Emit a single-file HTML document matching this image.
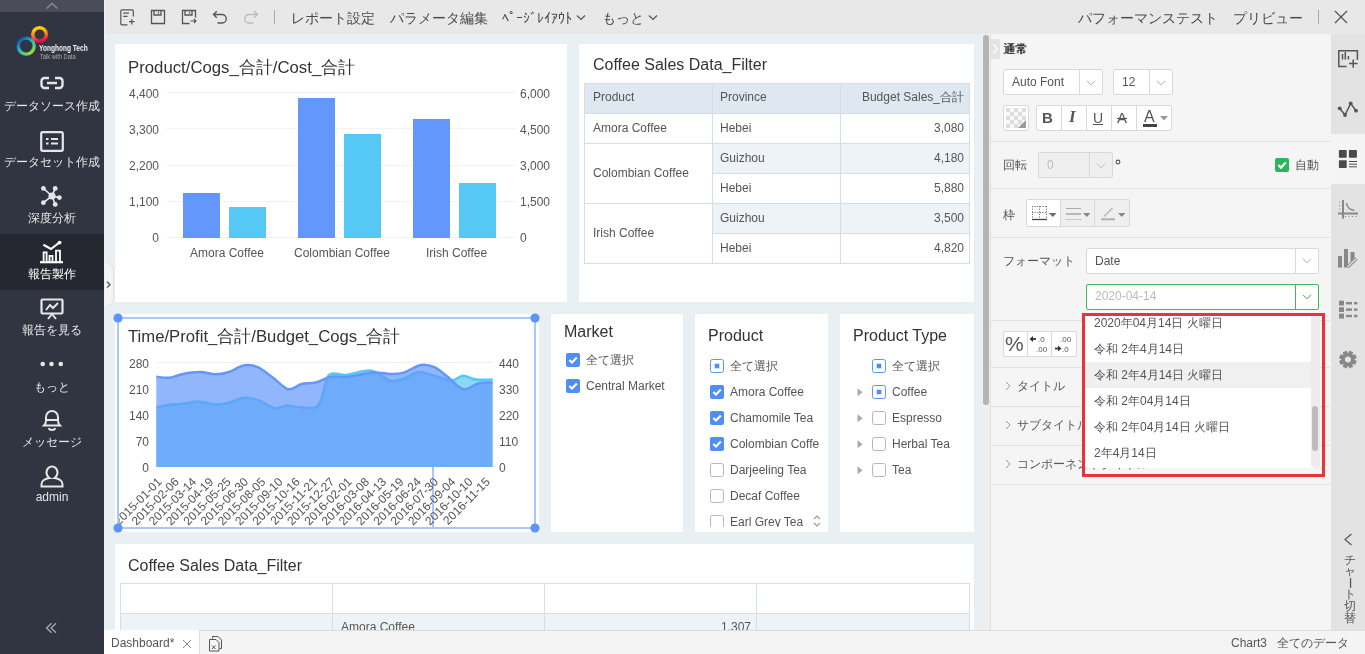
<!DOCTYPE html>
<html><head><meta charset="utf-8">
<style>
*{box-sizing:border-box;margin:0;padding:0}
html,body{width:1365px;height:654px;overflow:hidden;background:#e9f0f3;font-family:"Liberation Sans",sans-serif;color:#333}
.a{position:absolute}
#side{left:0;top:0;width:104px;height:654px;background:#313541}
#side .strip{left:0;top:0;width:104px;height:12px;background:#4a4c58}
.mi{position:absolute;left:0;width:104px;text-align:center;color:#e6e6e6;font-size:12px;line-height:14px;white-space:nowrap}
#tb{left:104px;top:0;width:1261px;height:34px;background:#e8e8e8}
.tbt{position:absolute;top:9.5px;font-size:14px;line-height:16px;color:#4a4a4a;white-space:nowrap}
.card{position:absolute;background:#fff}
.ttl{position:absolute;font-size:17px;line-height:20px;color:#333;white-space:nowrap}
.td{position:absolute;font-size:12px;line-height:14px;color:#555;white-space:nowrap}
.fi{position:absolute;font-size:12px;line-height:14px;color:#555;white-space:nowrap}
.rl{position:absolute;font-size:12px;line-height:14px;color:#555;white-space:nowrap}
.bx{position:absolute;background:#fff;border:1px solid #d9d9d9;border-radius:2px}
.hl{position:absolute;left:991px;width:339px;height:1px;background:#e2e2e2}
.dd{position:absolute;left:9px;height:26px;line-height:26px;font-size:12px;color:#555;white-space:nowrap;margin-top:-6px}
.ax{position:absolute;font-size:12px;line-height:14px;color:#555;white-space:nowrap}
#rp{left:991px;top:34px;width:340px;height:596px;background:#f5f5f5}
#ri{left:1331px;top:34px;width:34px;height:596px;background:#e3e3e3}
#bb{left:104px;top:630px;width:1261px;height:24px;background:#f4f4f4;border-top:1px solid #dcdcdc}
</style></head><body><div id="root" style="position:absolute;left:0;top:0;width:1365px;height:654px;will-change:transform">
<!-- SIDEBAR -->
<div id="side" class="a">
  <div class="strip a"><svg class="a" style="left:45px;top:2px" width="14" height="8" viewBox="0 0 14 8"><path d="M1.5 6.5L7 1.5L12.5 6.5" fill="none" stroke="#8a8c96" stroke-width="1.3"/></svg></div>
  <svg class="a" style="left:14px;top:24px" width="36" height="36" viewBox="0 0 36 36">
    <defs>
      <linearGradient id="g1" x1="0.3" y1="0" x2="0.5" y2="1"><stop offset="0" stop-color="#ffdc00"/><stop offset="0.5" stop-color="#ff8020"/><stop offset="1" stop-color="#f0084a"/></linearGradient>
      <linearGradient id="g2" x1="0" y1="0" x2="0.8" y2="1"><stop offset="0" stop-color="#1840b0"/><stop offset="0.5" stop-color="#22b4cc"/><stop offset="1" stop-color="#98dc30"/></linearGradient>
    </defs>
    <circle cx="25.6" cy="10.5" r="6.8" fill="none" stroke="url(#g1)" stroke-width="3.5"/>
    <circle cx="12.2" cy="22.1" r="8" fill="none" stroke="url(#g2)" stroke-width="3.3"/>
  </svg>
  <div class="a" style="left:39px;top:43px;font-size:9px;line-height:10px;font-weight:bold;color:#f0f0f0;white-space:nowrap;transform:scaleX(0.73);transform-origin:0 0">Yonghong Tech</div>
  <div class="a" style="left:40px;top:52.5px;font-size:6.5px;line-height:7px;color:#aaa;white-space:nowrap;transform:scaleX(0.88);transform-origin:0 0">Talk with Data</div>
  <svg class="a" style="left:40px;top:76px" width="24" height="14" viewBox="0 0 24 14"><path d="M9 2H4.5A3 3 0 0 0 1.5 5V9A3 3 0 0 0 4.5 12H9M15 2H19.5A3 3 0 0 1 22.5 5V9A3 3 0 0 1 19.5 12H15M7 7H17" fill="none" stroke="#e6e6e6" stroke-width="2.4"/></svg>
  <div class="mi" style="top:99px">データソース作成</div>
  <svg class="a" style="left:40px;top:131px" width="24" height="21" viewBox="0 0 24 21"><rect x="1.2" y="1.2" width="21.6" height="18.6" rx="1.5" fill="none" stroke="#e6e6e6" stroke-width="2.2"/><path d="M6 8H8.5M11 8H18M6 12.5H8.5M11 12.5H18" stroke="#e6e6e6" stroke-width="2.2"/></svg>
  <div class="mi" style="top:155px">データセット作成</div>
  <svg class="a" style="left:40px;top:184px" width="24" height="24" viewBox="0 0 24 24"><path d="M3.4 4.4L12 12M15.2 4.4L12 12M19.4 13.6L12 12M3.4 18.7L12 12M15.2 20.4L12 12" stroke="#e6e6e6" stroke-width="1.6"/><circle cx="12" cy="12" r="3.6" fill="#e6e6e6"/><circle cx="3.4" cy="4.4" r="2.4" fill="#e6e6e6"/><circle cx="15.2" cy="4.4" r="2.4" fill="#e6e6e6"/><circle cx="19.4" cy="13.6" r="2.4" fill="#e6e6e6"/><circle cx="3.4" cy="18.7" r="2.4" fill="#e6e6e6"/><circle cx="15.2" cy="20.4" r="2.4" fill="#e6e6e6"/></svg>
  <div class="mi" style="top:211px">深度分析</div>
  <div class="a" style="left:0;top:234px;width:104px;height:56px;background:#252831"></div>
  <svg class="a" style="left:39px;top:240px" width="26" height="26" viewBox="0 0 26 26"><path d="M4.4 4.7L12 9L20.4 2.5" fill="none" stroke="#fff" stroke-width="2.2"/><circle cx="20.6" cy="2.6" r="1.9" fill="#fff"/><path d="M4.6 21.5V12.4H7.6V21.5M10.5 21.5V15.8H13.5V21.5M17 21.5V10.7H21V21.5" fill="none" stroke="#fff" stroke-width="1.8"/><path d="M1 22.2H24" stroke="#fff" stroke-width="2.2"/></svg>
  <div class="mi" style="top:267px;color:#fff">報告製作</div>
  <svg class="a" style="left:40px;top:298px" width="24" height="22" viewBox="0 0 24 22"><rect x="1.5" y="1.5" width="21" height="14" rx="1" fill="none" stroke="#e6e6e6" stroke-width="2.2"/><path d="M6 12L10 7L13 10L18 5" fill="none" stroke="#e6e6e6" stroke-width="2"/><path d="M8 21L12 16L16 21" fill="none" stroke="#e6e6e6" stroke-width="2"/></svg>
  <div class="mi" style="top:323px">報告を見る</div>
  <svg class="a" style="left:40px;top:360px" width="24" height="8" viewBox="0 0 24 8"><circle cx="2.7" cy="4" r="2.3" fill="#e6e6e6"/><circle cx="11.5" cy="4" r="2.3" fill="#e6e6e6"/><circle cx="20.8" cy="4" r="2.3" fill="#e6e6e6"/></svg>
  <div class="mi" style="top:380px">もっと</div>
  <svg class="a" style="left:41px;top:409px" width="22" height="22" viewBox="0 0 22 22"><path d="M3 16.5H19C17.5 15 17 13.5 17 12V8A6 6 0 0 0 5 8V12C5 13.5 4.5 15 3 16.5ZM4.5 11H17.5M8 19A3 2 0 0 0 14 19" fill="none" stroke="#e6e6e6" stroke-width="2"/></svg>
  <div class="mi" style="top:435px">メッセージ</div>
  <svg class="a" style="left:40px;top:465px" width="24" height="23" viewBox="0 0 24 23"><path d="M12 1.5A5.5 6 0 0 1 17.5 7.5C17.5 10 16 12 14.5 13C19 13.5 22.5 16 22.5 19V21.5H1.5V19C1.5 16 5 13.5 9.5 13C8 12 6.5 10 6.5 7.5A5.5 6 0 0 1 12 1.5Z" fill="none" stroke="#e6e6e6" stroke-width="2"/></svg>
  <div class="mi" style="top:490px">admin</div>
  <svg class="a" style="left:45px;top:622px" width="14" height="12" viewBox="0 0 14 12"><path d="M6.5 1.2L1.6 6L6.5 10.8M11 1.2L6.1 6L11 10.8" fill="none" stroke="#a8aab2" stroke-width="1.3"/></svg>
</div>
<!-- TOOLBAR -->
<div id="tb" class="a">
  <svg class="a" style="left:16px;top:9px" width="16" height="17" viewBox="0 0 16 17"><path d="M13.3 7.5V1.8A1 1 0 0 0 12.3 0.8H1.8A1 1 0 0 0 0.8 1.8V14.8A1 1 0 0 0 1.8 15.8H7.5" fill="none" stroke="#555" stroke-width="1.2"/><path d="M3.2 4.2H9M3.2 7.4H7.5M9 12.7H14.5M11.8 10V15.5" fill="none" stroke="#555" stroke-width="1.2"/></svg>
  <svg class="a" style="left:46px;top:9px" width="16" height="16" viewBox="0 0 16 16"><path d="M1.5 1.5H14.5V14.5H1.5Z M4 1.5V6H11V1.5" fill="none" stroke="#555" stroke-width="1.3"/><path d="M8.5 2.8V4.5" stroke="#555" stroke-width="1.2"/></svg>
  <svg class="a" style="left:77px;top:9px" width="17" height="16" viewBox="0 0 17 16"><path d="M8.5 14.5H1.5V1.5H14.5V8.5 M4 1.5V6H11V1.5" fill="none" stroke="#555" stroke-width="1.3"/><path d="M8.5 2.8V4.5" stroke="#555" stroke-width="1.2"/><path d="M9.5 12H15M13 10L15 12L13 14" fill="none" stroke="#555" stroke-width="1.1"/></svg>
  <svg class="a" style="left:108px;top:10px" width="16" height="14" viewBox="0 0 16 14"><path d="M1.5 4.5H10A4.2 4.2 0 0 1 10 13H5.5M4.8 1.2L1.5 4.5L4.8 7.8" fill="none" stroke="#555" stroke-width="1.3"/></svg>
  <svg class="a" style="left:139px;top:10px" width="16" height="14" viewBox="0 0 16 14"><path d="M14.5 4.5H6A4.2 4.2 0 0 0 6 13H10.5M11.2 1.2L14.5 4.5L11.2 7.8" fill="none" stroke="#bbb" stroke-width="1.3"/></svg>
  <div class="a" style="left:170px;top:10px;width:1px;height:14px;background:#aaa"></div>
  <div class="tbt" style="left:187px">レポート設定</div>
  <div class="tbt" style="left:286px">パラメータ編集</div>
  <div class="tbt" style="left:398px">ﾍﾟｰｼﾞﾚｲｱｳﾄ</div>
  <svg class="a" style="left:472px;top:14px" width="10" height="7" viewBox="0 0 10 7"><path d="M1 1.5L5 5.5L9 1.5" fill="none" stroke="#555" stroke-width="1.2"/></svg>
  <div class="tbt" style="left:498px">もっと</div>
  <svg class="a" style="left:544px;top:14px" width="10" height="7" viewBox="0 0 10 7"><path d="M1 1.5L5 5.5L9 1.5" fill="none" stroke="#555" stroke-width="1.2"/></svg>
  <div class="tbt" style="left:974px">パフォーマンステスト</div>
  <div class="tbt" style="left:1129px">プリビュー</div>
  <div class="a" style="left:1214px;top:10px;width:1px;height:14px;background:#aaa"></div>
  <svg class="a" style="left:1230px;top:10px" width="14" height="14" viewBox="0 0 14 14"><path d="M1 1L13 13M13 1L1 13" stroke="#555" stroke-width="1.3"/></svg>
</div>
<!-- CANVAS CARDS -->
<div id="canvas">
<!-- card1 bar chart -->
<div class="card" style="left:115px;top:44px;width:452px;height:258px"></div>
<div class="ttl" style="left:128px;top:57.5px;font-size:16.75px">Product/Cogs_合計/Cost_合計</div>
<svg class="a" style="left:115px;top:44px" width="452" height="258" viewBox="115 44 452 258">
  <g stroke="#f3f3f3" stroke-width="1">
    <path d="M167 92.5H517M167 128.5H517M167 165.5H517M167 201.5H517M167 237.5H517"/>
  </g>
  <g fill="#6397fb">
    <rect x="183" y="193" width="37" height="45"/>
    <rect x="298" y="98" width="37" height="140"/>
    <rect x="413" y="119" width="37" height="119"/>
  </g>
  <g fill="#56c8f5">
    <rect x="229" y="207" width="37" height="31"/>
    <rect x="344" y="134" width="37" height="104"/>
    <rect x="459" y="183" width="37" height="55"/>
  </g>
</svg>
<div class="ax" style="right:1206px;top:87px">4,400</div>
<div class="ax" style="right:1206px;top:123px">3,300</div>
<div class="ax" style="right:1206px;top:159px">2,200</div>
<div class="ax" style="right:1206px;top:195px">1,100</div>
<div class="ax" style="right:1206px;top:231px">0</div>
<div class="ax" style="left:520px;top:87px">6,000</div>
<div class="ax" style="left:520px;top:123px">4,500</div>
<div class="ax" style="left:520px;top:159px">3,000</div>
<div class="ax" style="left:520px;top:195px">1,500</div>
<div class="ax" style="left:520px;top:231px">0</div>
<div class="ax" style="left:190px;top:246px">Amora Coffee</div>
<div class="ax" style="left:294px;top:246px">Colombian Coffee</div>
<div class="ax" style="left:426px;top:246px">Irish Coffee</div>
<svg class="a" style="left:104px;top:256px" width="12" height="58" viewBox="104 256 12 58"><path d="M104 258C104 264 113.5 263 113.5 270V299C113.5 306 104 305 104 312Z" fill="#f4f4f4" stroke="#e2e2e2" stroke-width="1"/><path d="M107 281.8L110 284.7L107 287.6" fill="none" stroke="#555" stroke-width="1.3"/></svg>
<!-- card2 table -->
<div class="card" style="left:579px;top:44px;width:395px;height:258px"></div>
<div class="ttl" style="left:593px;top:55px;font-size:16px">Coffee Sales Data_Filter</div>
<div class="a" style="left:584px;top:83px;width:386px;height:181px;border:1px solid #d5dee6;background:#fff"></div>
<div class="a" style="left:585px;top:84px;width:384px;height:29px;background:#dfe8f1"></div>
<div class="a" style="left:713px;top:144px;width:256px;height:29px;background:#eef3f7"></div>
<div class="a" style="left:713px;top:204px;width:256px;height:29px;background:#eef3f7"></div>
<svg class="a" style="left:584px;top:83px" width="386" height="181" viewBox="584 83 386 181">
  <g stroke="#d5dee6" stroke-width="1">
    <path d="M584 113.5H970M584 143.5H970M713 173.5H970M584 203.5H970M713 233.5H970M712.5 83V264M840.5 83V264"/>
  </g>
</svg>
<div class="td" style="left:593px;top:90px">Product</div>
<div class="td" style="left:720px;top:90px">Province</div>
<div class="td" style="right:401px;top:90px">Budget Sales_合計</div>
<div class="td" style="left:593px;top:121px">Amora Coffee</div>
<div class="td" style="left:720px;top:121px">Hebei</div>
<div class="td" style="right:401px;top:121px">3,080</div>
<div class="td" style="left:593px;top:166px">Colombian Coffee</div>
<div class="td" style="left:720px;top:151px">Guizhou</div>
<div class="td" style="right:401px;top:151px">4,180</div>
<div class="td" style="left:720px;top:181px">Hebei</div>
<div class="td" style="right:401px;top:181px">5,880</div>
<div class="td" style="left:593px;top:226px">Irish Coffee</div>
<div class="td" style="left:720px;top:211px">Guizhou</div>
<div class="td" style="right:401px;top:211px">3,500</div>
<div class="td" style="left:720px;top:241px">Hebei</div>
<div class="td" style="right:401px;top:241px">4,820</div>
<!-- line chart card -->
<div class="card" style="left:115px;top:314px;width:424px;height:218px"></div>
<div class="ttl" style="left:128px;top:327px;font-size:16.7px">Time/Profit_合計/Budget_Cogs_合計</div>
<svg class="a" style="left:115px;top:314px" width="424" height="218" viewBox="115 314 424 218">
  <defs><clipPath id="cl"><rect x="119" y="314" width="420" height="218"/></clipPath></defs>
  <path d="M156 362.5H493" stroke="#f0f0f0" stroke-width="1"/>
  <path d="M156.3 407.4 C158.9 406.9 166.8 405.1 171.6 404.5 C176.4 403.9 180.5 404.0 185.0 403.5 C189.5 403.0 193.3 401.4 198.4 401.6 C203.5 401.8 210.5 404.3 215.6 404.5 C220.7 404.7 224.2 403.7 229.0 402.6 C233.8 401.5 239.2 398.1 244.3 397.8 C249.4 397.5 254.5 398.9 259.6 400.7 C264.7 402.4 270.4 407.4 274.9 408.3 C279.3 409.2 281.9 406.0 286.3 405.8 C290.8 405.6 296.7 407.1 301.6 407.4 C306.5 407.7 312.4 408.8 315.7 407.4 C319.0 406.0 319.3 404.2 321.5 398.8 C323.7 393.4 325.0 378.9 329.1 374.9 C333.2 370.9 339.3 375.6 346.3 374.9 C353.3 374.2 363.9 369.8 371.2 370.7 C378.5 371.6 384.9 379.3 390.3 380.6 C395.7 381.9 398.9 380.1 403.7 378.7 C408.5 377.3 413.9 372.5 419.0 372.0 C424.1 371.5 428.9 374.4 434.3 375.8 C439.7 377.2 446.7 380.6 451.5 380.6 C456.3 380.6 458.9 376.0 463.0 375.8 C467.1 375.6 471.4 379.0 476.3 379.6 C481.2 380.2 489.9 379.6 492.6 379.6 L492.6 467 L156.3 467 Z" fill="#56c8f5" fill-opacity="0.7"/>
  <path d="M156.3 407.4 C158.9 406.9 166.8 405.1 171.6 404.5 C176.4 403.9 180.5 404.0 185.0 403.5 C189.5 403.0 193.3 401.4 198.4 401.6 C203.5 401.8 210.5 404.3 215.6 404.5 C220.7 404.7 224.2 403.7 229.0 402.6 C233.8 401.5 239.2 398.1 244.3 397.8 C249.4 397.5 254.5 398.9 259.6 400.7 C264.7 402.4 270.4 407.4 274.9 408.3 C279.3 409.2 281.9 406.0 286.3 405.8 C290.8 405.6 296.7 407.1 301.6 407.4 C306.5 407.7 312.4 408.8 315.7 407.4 C319.0 406.0 319.3 404.2 321.5 398.8 C323.7 393.4 325.0 378.9 329.1 374.9 C333.2 370.9 339.3 375.6 346.3 374.9 C353.3 374.2 363.9 369.8 371.2 370.7 C378.5 371.6 384.9 379.3 390.3 380.6 C395.7 381.9 398.9 380.1 403.7 378.7 C408.5 377.3 413.9 372.5 419.0 372.0 C424.1 371.5 428.9 374.4 434.3 375.8 C439.7 377.2 446.7 380.6 451.5 380.6 C456.3 380.6 458.9 376.0 463.0 375.8 C467.1 375.6 471.4 379.0 476.3 379.6 C481.2 380.2 489.9 379.6 492.6 379.6" fill="none" stroke="#56c8f5" stroke-width="2.5"/>
  <path d="M156.3 376.8 C158.5 376.9 165.2 378.2 169.7 377.7 C174.1 377.2 177.9 374.8 183.0 373.9 C188.1 372.9 194.9 371.9 200.3 372.0 C205.7 372.1 210.8 374.3 215.6 374.3 C220.4 374.3 224.2 373.5 229.0 372.0 C233.8 370.5 239.5 366.1 244.3 365.3 C249.1 364.5 252.9 365.1 257.7 367.2 C262.5 369.3 267.9 374.0 273.0 377.7 C278.1 381.4 283.5 388.1 288.3 389.2 C293.1 390.2 297.0 385.1 301.6 384.0 C306.2 382.9 310.8 383.7 315.7 382.5 C320.6 381.3 325.6 377.8 331.0 376.8 C336.4 375.9 341.2 377.5 348.2 376.8 C355.2 376.1 366.0 373.1 373.0 372.6 C380.0 372.1 385.2 373.9 390.3 373.9 C395.4 373.9 398.6 374.1 403.7 372.6 C408.8 371.1 415.8 365.8 420.9 364.9 C426.0 364.0 429.8 365.2 434.3 367.2 C438.8 369.2 442.9 373.1 447.7 376.8 C452.5 380.5 457.9 388.1 463.0 389.2 C468.1 390.3 473.4 384.6 478.3 383.5 C483.2 382.4 490.2 382.7 492.6 382.5 L492.6 467 L156.3 467 Z" fill="#6397fb" fill-opacity="0.7"/>
  <path d="M156.3 376.8 C158.5 376.9 165.2 378.2 169.7 377.7 C174.1 377.2 177.9 374.8 183.0 373.9 C188.1 372.9 194.9 371.9 200.3 372.0 C205.7 372.1 210.8 374.3 215.6 374.3 C220.4 374.3 224.2 373.5 229.0 372.0 C233.8 370.5 239.5 366.1 244.3 365.3 C249.1 364.5 252.9 365.1 257.7 367.2 C262.5 369.3 267.9 374.0 273.0 377.7 C278.1 381.4 283.5 388.1 288.3 389.2 C293.1 390.2 297.0 385.1 301.6 384.0 C306.2 382.9 310.8 383.7 315.7 382.5 C320.6 381.3 325.6 377.8 331.0 376.8 C336.4 375.9 341.2 377.5 348.2 376.8 C355.2 376.1 366.0 373.1 373.0 372.6 C380.0 372.1 385.2 373.9 390.3 373.9 C395.4 373.9 398.6 374.1 403.7 372.6 C408.8 371.1 415.8 365.8 420.9 364.9 C426.0 364.0 429.8 365.2 434.3 367.2 C438.8 369.2 442.9 373.1 447.7 376.8 C452.5 380.5 457.9 388.1 463.0 389.2 C468.1 390.3 473.4 384.6 478.3 383.5 C483.2 382.4 490.2 382.7 492.6 382.5" fill="none" stroke="#6397fb" stroke-width="2.5"/>
  <path d="M433 467V528" stroke="#a8c6ff" stroke-width="2"/>
  <g clip-path="url(#cl)" font-family="Liberation Sans" font-size="12" fill="#555"><text x="162.5" y="482.6" text-anchor="end" transform="rotate(-45 162.5 482.6)">2015-01-01</text><text x="179.8" y="482.6" text-anchor="end" transform="rotate(-45 179.8 482.6)">2015-02-06</text><text x="197.1" y="482.6" text-anchor="end" transform="rotate(-45 197.1 482.6)">2015-03-14</text><text x="214.3" y="482.6" text-anchor="end" transform="rotate(-45 214.3 482.6)">2015-04-19</text><text x="231.6" y="482.6" text-anchor="end" transform="rotate(-45 231.6 482.6)">2015-05-25</text><text x="248.9" y="482.6" text-anchor="end" transform="rotate(-45 248.9 482.6)">2015-06-30</text><text x="266.2" y="482.6" text-anchor="end" transform="rotate(-45 266.2 482.6)">2015-08-05</text><text x="283.5" y="482.6" text-anchor="end" transform="rotate(-45 283.5 482.6)">2015-09-10</text><text x="300.7" y="482.6" text-anchor="end" transform="rotate(-45 300.7 482.6)">2015-10-16</text><text x="318.0" y="482.6" text-anchor="end" transform="rotate(-45 318.0 482.6)">2015-11-21</text><text x="335.3" y="482.6" text-anchor="end" transform="rotate(-45 335.3 482.6)">2015-12-27</text><text x="352.6" y="482.6" text-anchor="end" transform="rotate(-45 352.6 482.6)">2016-02-01</text><text x="369.9" y="482.6" text-anchor="end" transform="rotate(-45 369.9 482.6)">2016-03-08</text><text x="387.1" y="482.6" text-anchor="end" transform="rotate(-45 387.1 482.6)">2016-04-13</text><text x="404.4" y="482.6" text-anchor="end" transform="rotate(-45 404.4 482.6)">2016-05-19</text><text x="421.7" y="482.6" text-anchor="end" transform="rotate(-45 421.7 482.6)">2016-06-24</text><text x="439.0" y="482.6" text-anchor="end" transform="rotate(-45 439.0 482.6)">2016-07-30</text><text x="456.3" y="482.6" text-anchor="end" transform="rotate(-45 456.3 482.6)">2016-09-04</text><text x="473.5" y="482.6" text-anchor="end" transform="rotate(-45 473.5 482.6)">2016-10-10</text><text x="490.8" y="482.6" text-anchor="end" transform="rotate(-45 490.8 482.6)">2016-11-15</text></g>
  </svg>
<div class="ax" style="right:1216px;top:357px">280</div>
<div class="ax" style="right:1216px;top:383px">210</div>
<div class="ax" style="right:1216px;top:409px">140</div>
<div class="ax" style="right:1216px;top:435px">70</div>
<div class="ax" style="right:1216px;top:461px">0</div>
<div class="ax" style="left:499px;top:357px">440</div>
<div class="ax" style="left:499px;top:383px">330</div>
<div class="ax" style="left:499px;top:409px">220</div>
<div class="ax" style="left:499px;top:435px">110</div>
<div class="ax" style="left:499px;top:461px">0</div>
<svg class="a" style="left:110px;top:310px" width="434" height="226" viewBox="110 310 434 226">
  <rect x="118" y="318" width="417" height="210" fill="none" stroke="#a8c6ff" stroke-width="2"/>
  <g fill="#5b95f9"><circle cx="118" cy="318" r="4.6"/><circle cx="535" cy="318" r="4.6"/><circle cx="118" cy="528" r="4.6"/><circle cx="535" cy="528" r="4.6"/></g>
</svg>
<!-- filters -->
<div class="card" style="left:551px;top:314px;width:132px;height:218px"></div>
<div class="card" style="left:695px;top:314px;width:133px;height:218px"></div>
<div class="card" style="left:840px;top:314px;width:134px;height:218px"></div>
<div class="ttl" style="left:564px;top:322px;font-size:16px">Market</div>
<svg class="a" style="left:566px;top:353px" width="14" height="14" viewBox="0 0 14 14"><rect x="0" y="0" width="14" height="14" rx="2" fill="#4f8ef7"/><path d="M3.3 7L6 9.6L10.8 4.6" fill="none" stroke="#fff" stroke-width="2.1"/></svg><div class="fi" style="left:586px;top:353px">全て選択</div>
<svg class="a" style="left:566px;top:379px" width="14" height="14" viewBox="0 0 14 14"><rect x="0" y="0" width="14" height="14" rx="2" fill="#4f8ef7"/><path d="M3.3 7L6 9.6L10.8 4.6" fill="none" stroke="#fff" stroke-width="2.1"/></svg><div class="fi" style="left:586px;top:379px">Central Market</div>
<div class="ttl" style="left:708px;top:326px;font-size:16px">Product</div>
<div class="a" style="left:695px;top:314px;width:133px;height:213px;overflow:hidden"><svg class="a" style="left:15px;top:45px" width="14" height="14" viewBox="0 0 14 14"><rect x="0.5" y="0.5" width="13" height="13" rx="2" fill="#fff" stroke="#5b95f9" stroke-width="1"/><rect x="4.7" y="4.7" width="4.6" height="4.6" fill="#4f8ef7"/></svg><div class="fi" style="left:35px;top:45px">全て選択</div>
<svg class="a" style="left:15px;top:71px" width="14" height="14" viewBox="0 0 14 14"><rect x="0" y="0" width="14" height="14" rx="2" fill="#4f8ef7"/><path d="M3.3 7L6 9.6L10.8 4.6" fill="none" stroke="#fff" stroke-width="2.1"/></svg><div class="fi" style="left:35px;top:71px">Amora Coffee</div>
<svg class="a" style="left:15px;top:97px" width="14" height="14" viewBox="0 0 14 14"><rect x="0" y="0" width="14" height="14" rx="2" fill="#4f8ef7"/><path d="M3.3 7L6 9.6L10.8 4.6" fill="none" stroke="#fff" stroke-width="2.1"/></svg><div class="fi" style="left:35px;top:97px">Chamomile Tea</div>
<svg class="a" style="left:15px;top:123px" width="14" height="14" viewBox="0 0 14 14"><rect x="0" y="0" width="14" height="14" rx="2" fill="#4f8ef7"/><path d="M3.3 7L6 9.6L10.8 4.6" fill="none" stroke="#fff" stroke-width="2.1"/></svg><div class="fi" style="left:35px;top:123px">Colombian Coffe</div>
<svg class="a" style="left:15px;top:149px" width="14" height="14" viewBox="0 0 14 14"><rect x="0.5" y="0.5" width="13" height="13" rx="2" fill="#fff" stroke="#b8b8b8" stroke-width="1"/></svg><div class="fi" style="left:35px;top:149px">Darjeeling Tea</div>
<svg class="a" style="left:15px;top:175px" width="14" height="14" viewBox="0 0 14 14"><rect x="0.5" y="0.5" width="13" height="13" rx="2" fill="#fff" stroke="#b8b8b8" stroke-width="1"/></svg><div class="fi" style="left:35px;top:175px">Decaf Coffee</div>
<svg class="a" style="left:15px;top:201px" width="14" height="14" viewBox="0 0 14 14"><rect x="0.5" y="0.5" width="13" height="13" rx="2" fill="#fff" stroke="#b8b8b8" stroke-width="1"/></svg><div class="fi" style="left:35px;top:201px">Earl Grey Tea</div>
<svg class="a" style="left:117px;top:200px" width="10" height="14" viewBox="0 0 10 14"><path d="M2 5L5 2L8 5M2 9L5 12L8 9" fill="none" stroke="#999" stroke-width="1.1"/></svg></div>
<div class="ttl" style="left:853px;top:326px;font-size:16px">Product Type</div>
<svg class="a" style="left:872px;top:359px" width="14" height="14" viewBox="0 0 14 14"><rect x="0.5" y="0.5" width="13" height="13" rx="2" fill="#fff" stroke="#5b95f9" stroke-width="1"/><rect x="4.7" y="4.7" width="4.6" height="4.6" fill="#4f8ef7"/></svg><div class="fi" style="left:892px;top:359px">全て選択</div>
<svg class="a" style="left:856.5px;top:388px" width="7" height="9" viewBox="0 0 7 9"><path d="M0.5 0.3L5.6 4.3L0.5 8.3Z" fill="#aaa"/></svg><svg class="a" style="left:872px;top:385px" width="14" height="14" viewBox="0 0 14 14"><rect x="0.5" y="0.5" width="13" height="13" rx="2" fill="#fff" stroke="#5b95f9" stroke-width="1"/><rect x="4.7" y="4.7" width="4.6" height="4.6" fill="#4f8ef7"/></svg><div class="fi" style="left:892px;top:385px">Coffee</div>
<svg class="a" style="left:856.5px;top:414px" width="7" height="9" viewBox="0 0 7 9"><path d="M0.5 0.3L5.6 4.3L0.5 8.3Z" fill="#aaa"/></svg><svg class="a" style="left:872px;top:411px" width="14" height="14" viewBox="0 0 14 14"><rect x="0.5" y="0.5" width="13" height="13" rx="2" fill="#fff" stroke="#b8b8b8" stroke-width="1"/></svg><div class="fi" style="left:892px;top:411px">Espresso</div>
<svg class="a" style="left:856.5px;top:440px" width="7" height="9" viewBox="0 0 7 9"><path d="M0.5 0.3L5.6 4.3L0.5 8.3Z" fill="#aaa"/></svg><svg class="a" style="left:872px;top:437px" width="14" height="14" viewBox="0 0 14 14"><rect x="0.5" y="0.5" width="13" height="13" rx="2" fill="#fff" stroke="#b8b8b8" stroke-width="1"/></svg><div class="fi" style="left:892px;top:437px">Herbal Tea</div>
<svg class="a" style="left:856.5px;top:466px" width="7" height="9" viewBox="0 0 7 9"><path d="M0.5 0.3L5.6 4.3L0.5 8.3Z" fill="#aaa"/></svg><svg class="a" style="left:872px;top:463px" width="14" height="14" viewBox="0 0 14 14"><rect x="0.5" y="0.5" width="13" height="13" rx="2" fill="#fff" stroke="#b8b8b8" stroke-width="1"/></svg><div class="fi" style="left:892px;top:463px">Tea</div>
<!-- bottom table -->
<div class="card" style="left:115px;top:544px;width:859px;height:90px"></div>
<div class="ttl" style="left:128px;top:556px;font-size:16px">Coffee Sales Data_Filter</div>
<div class="a" style="left:120px;top:583px;width:850px;height:60px;border:1px solid #d5dee6;background:#fff"></div>
<div class="a" style="left:121px;top:614px;width:848px;height:30px;background:#eef3f7"></div>
<svg class="a" style="left:120px;top:583px" width="850" height="60" viewBox="120 583 850 60">
  <g stroke="#d5dee6" stroke-width="1"><path d="M120 613.5H970M332.5 583V643M544.5 583V643M756.5 583V643"/></g>
</svg>
<div class="td" style="left:341px;top:620px">Amora Coffee</div>
<div class="td" style="right:614px;top:620px">1,307</div>
</div>
<div class="a" style="left:104px;top:0;width:1px;height:630px;background:#f0f0f0"></div>
<!-- RIGHT PANEL -->
<!-- canvas scrollbar -->
<div class="a" style="left:982px;top:34px;width:8px;height:596px;background:#efefef"></div>
<div class="a" style="left:983px;top:35px;width:6px;height:370px;background:#b4b4b4;border-radius:3px"></div>
<div class="a" style="left:990px;top:34px;width:1px;height:596px;background:#e0e0e0"></div>
<div id="rp" class="a"></div>
<div class="a" style="left:991px;top:39px;width:9px;height:20px;background:#e3e3e3;border-radius:0 2px 2px 0"></div>
<svg class="a" style="left:992px;top:43px" width="7" height="12" viewBox="0 0 7 12"><path d="M1.5 1.5L5.5 6L1.5 10.5" fill="none" stroke="#fff" stroke-width="1.3"/></svg>
<div class="rl" style="left:1003px;top:42px;color:#333;text-shadow:0.6px 0 0 #333">通常</div>
<div class="bx" style="left:1003px;top:69px;width:100px;height:26px"></div>
<div class="a" style="left:1079px;top:70px;width:1px;height:24px;background:#d9d9d9"></div>
<div class="rl" style="left:1012px;top:75px;color:#555">Auto Font</div>
<svg class="a" style="left:1086px;top:80px" width="10" height="6" viewBox="0 0 10 6"><path d="M1 0.8L5 4.8L9 0.8" fill="none" stroke="#aaa" stroke-width="1"/></svg>
<div class="bx" style="left:1113px;top:69px;width:60px;height:26px"></div>
<div class="a" style="left:1149px;top:70px;width:1px;height:24px;background:#d9d9d9"></div>
<div class="rl" style="left:1122px;top:75px;color:#555">12</div>
<svg class="a" style="left:1156px;top:80px" width="10" height="6" viewBox="0 0 10 6"><path d="M1 0.8L5 4.8L9 0.8" fill="none" stroke="#aaa" stroke-width="1"/></svg>
<div class="bx" style="left:1003px;top:105px;width:26px;height:26px"></div>
<svg class="a" style="left:1006px;top:108px" width="20" height="20" viewBox="0 0 20 20">
 <rect width="20" height="20" fill="#f7f7f7"/>
 <g fill="#dedede"><rect x="0" y="0" width="4" height="4"/><rect x="8" y="0" width="4" height="4"/><rect x="16" y="0" width="4" height="4"/><rect x="4" y="4" width="4" height="4"/><rect x="12" y="4" width="4" height="4"/><rect x="0" y="8" width="4" height="4"/><rect x="8" y="8" width="4" height="4"/><rect x="16" y="8" width="4" height="4"/><rect x="4" y="12" width="4" height="4"/><rect x="12" y="12" width="4" height="4"/><rect x="0" y="16" width="4" height="4"/><rect x="8" y="16" width="4" height="4"/></g>
 <path d="M20 12V20H12Z" fill="#9a9a9a"/>
</svg>
<div class="bx" style="left:1036px;top:105px;width:136px;height:26px"></div>
<div class="a" style="left:1061px;top:106px;width:1px;height:24px;background:#d9d9d9"></div>
<div class="a" style="left:1086px;top:106px;width:1px;height:24px;background:#d9d9d9"></div>
<div class="a" style="left:1111px;top:106px;width:1px;height:24px;background:#d9d9d9"></div>
<div class="a" style="left:1136px;top:106px;width:1px;height:24px;background:#d9d9d9"></div>
<div class="a" style="left:1042px;top:109px;font-size:15px;line-height:18px;font-weight:bold;color:#555">B</div>
<div class="a" style="left:1069px;top:108px;font-size:17px;line-height:18px;font-family:'Liberation Serif',serif;font-style:italic;font-weight:bold;color:#555">I</div>
<div class="a" style="left:1093px;top:109px;font-size:14px;line-height:18px;color:#555;text-decoration:underline">U</div>
<div class="a" style="left:1117px;top:109px;font-size:15px;line-height:18px;color:#555;text-decoration:line-through">A</div>
<div class="a" style="left:1144px;top:108px;font-size:16px;line-height:18px;color:#555">A</div>
<div class="a" style="left:1143px;top:124px;width:14px;height:3px;background:#444"></div>
<svg class="a" style="left:1160px;top:116px" width="8" height="5" viewBox="0 0 8 5"><path d="M0 0H8L4 4.5Z" fill="#999"/></svg>
<div class="hl" style="top:141px"></div>
<div class="rl" style="left:1003px;top:158px">回転</div>
<div class="bx" style="left:1038px;top:152px;width:75px;height:26px;background:#efefef"></div>
<div class="a" style="left:1089px;top:153px;width:1px;height:24px;background:#d9d9d9"></div>
<div class="rl" style="left:1047px;top:158px;color:#bbb">0</div>
<svg class="a" style="left:1096px;top:163px" width="10" height="6" viewBox="0 0 10 6"><path d="M1 0.8L5 4.8L9 0.8" fill="none" stroke="#bbb" stroke-width="1"/></svg>
<svg class="a" style="left:1115px;top:159px" width="6" height="6" viewBox="0 0 6 6"><circle cx="3" cy="3" r="1.9" fill="none" stroke="#555" stroke-width="1.1"/></svg>
<svg class="a" style="left:1275px;top:158px" width="14" height="14" viewBox="0 0 14 14"><rect width="14" height="14" rx="2" fill="#2db55d"/><path d="M3.3 7L6 9.6L10.8 4.6" fill="none" stroke="#fff" stroke-width="2.2"/></svg>
<div class="rl" style="left:1295px;top:158px">自動</div>
<div class="hl" style="top:188px"></div>
<div class="rl" style="left:1003px;top:208px">枠</div>
<div class="bx" style="left:1026px;top:199px;width:104px;height:28px;background:#efefef"></div>
<div class="a" style="left:1027px;top:200px;width:33px;height:26px;background:#fff"></div>
<div class="a" style="left:1060px;top:200px;width:1px;height:26px;background:#d9d9d9"></div>
<div class="a" style="left:1094px;top:200px;width:1px;height:26px;background:#d9d9d9"></div>
<svg class="a" style="left:1026px;top:199px" width="104" height="28" viewBox="1026 199 104 28">
  <g stroke="#777" stroke-width="1" stroke-dasharray="1.2 1.4"><path d="M1032 206.5H1047M1032 212.5H1047M1032.5 206V218M1039.5 206V218M1046.5 206V218"/></g>
  <path d="M1032 219.5H1047" stroke="#444" stroke-width="1.3"/>
  <path d="M1049 213H1056.5L1052.75 217Z" fill="#666"/>
  <path d="M1066 208.5H1081" stroke="#aaa" stroke-width="1"/>
  <path d="M1066 214H1081" stroke="#aaa" stroke-width="1.6"/>
  <path d="M1066 219.5H1081" stroke="#aaa" stroke-width="1" stroke-dasharray="1.5 1.2"/>
  <path d="M1083 213H1090.5L1086.75 217Z" fill="#888"/>
  <path d="M1104 216.5L1112.5 208" stroke="#bbb" stroke-width="1.6"/>
  <path d="M1101 219.3H1115" stroke="#aaa" stroke-width="1.8"/>
  <path d="M1118 213H1125.5L1121.75 217Z" fill="#888"/>
</svg>
<div class="hl" style="top:237px"></div>
<div class="rl" style="left:1003px;top:254px">フォーマット</div>
<div class="bx" style="left:1086px;top:248px;width:233px;height:26px"></div>
<div class="a" style="left:1295px;top:249px;width:1px;height:24px;background:#d9d9d9"></div>
<div class="rl" style="left:1095px;top:254px;color:#555">Date</div>
<svg class="a" style="left:1302px;top:258px" width="10" height="6" viewBox="0 0 10 6"><path d="M1 0.8L5 4.8L9 0.8" fill="none" stroke="#aaa" stroke-width="1"/></svg>
<div class="bx" style="left:1086px;top:284px;width:233px;height:26px;border-color:#3dba5e"></div>
<div class="a" style="left:1295px;top:285px;width:1px;height:24px;background:#3dba5e"></div>
<div class="rl" style="left:1095px;top:289px;color:#bbb">2020-04-14</div>
<svg class="a" style="left:1302px;top:294px" width="10" height="6" viewBox="0 0 10 6"><path d="M1 0.8L5 4.8L9 0.8" fill="none" stroke="#2fae52" stroke-width="1"/></svg>
<div class="hl" style="top:320px"></div>
<div class="bx" style="left:1003px;top:331px;width:74px;height:26px"></div>
<div class="a" style="left:1027px;top:332px;width:1px;height:24px;background:#d9d9d9"></div>
<div class="a" style="left:1051px;top:332px;width:1px;height:24px;background:#d9d9d9"></div>
<div class="a" style="left:1005px;top:332px;font-size:21px;line-height:24px;color:#555">%</div>
<svg class="a" style="left:1028px;top:332px" width="23" height="24" viewBox="0 0 23 24"><path d="M8 7H3.5" stroke="#333" stroke-width="1.8"/><path d="M1.5 7L5 4V10Z" fill="#333"/><text x="10" y="10" font-size="8" font-family="Liberation Sans" fill="#555">.0</text><text x="8" y="20" font-size="8" font-family="Liberation Sans" fill="#555">.00</text></svg>
<svg class="a" style="left:1052px;top:332px" width="23" height="24" viewBox="0 0 23 24"><text x="8" y="10" font-size="8" font-family="Liberation Sans" fill="#555">.00</text><path d="M3 16.5H7.5" stroke="#333" stroke-width="1.8"/><path d="M9.5 16.5L6 13.5V19.5Z" fill="#333"/><text x="10" y="20" font-size="8" font-family="Liberation Sans" fill="#555">.0</text></svg>
<div class="hl" style="top:367px"></div>
<svg class="a" style="left:1005px;top:381px" width="6" height="10" viewBox="0 0 6 10"><path d="M1 1L5 5L1 9" fill="none" stroke="#999" stroke-width="1"/></svg>
<div class="rl" style="left:1017px;top:379px">タイトル</div>
<div class="hl" style="top:406px"></div>
<svg class="a" style="left:1005px;top:420px" width="6" height="10" viewBox="0 0 6 10"><path d="M1 1L5 5L1 9" fill="none" stroke="#999" stroke-width="1"/></svg>
<div class="rl" style="left:1017px;top:418px">サブタイトル</div>
<div class="hl" style="top:445px"></div>
<svg class="a" style="left:1005px;top:459px" width="6" height="10" viewBox="0 0 6 10"><path d="M1 1L5 5L1 9" fill="none" stroke="#999" stroke-width="1"/></svg>
<div class="rl" style="left:1017px;top:457px">コンポーネントタイトル</div>
<div class="hl" style="top:484px"></div>
<!-- dropdown -->
<div class="a" style="left:1082px;top:313px;width:243px;height:164px;border:3px solid #ec3237"></div>
<div class="a" style="left:1085px;top:316px;width:235px;height:152px;background:#fff;overflow:hidden">
  <div class="a" style="left:0;top:46px;width:226px;height:26px;background:#f0f0f0"></div>
  <div class="dd" style="top:0px">2020年04月14日 火曜日</div>
  <div class="dd" style="top:26px">令和 2年4月14日</div>
  <div class="dd" style="top:52px">令和 2年4月14日 火曜日</div>
  <div class="dd" style="top:78px">令和 2年04月14日</div>
  <div class="dd" style="top:104px">令和 2年04月14日 火曜日</div>
  <div class="dd" style="top:130px">2年4月14日</div>
  <div class="a" style="left:226px;top:0;width:9px;height:152px;background:#ececec;border-radius:0 0 4px 4px"></div>
  <div class="a" style="left:227px;top:90px;width:6px;height:45px;background:#bdbdbd;border-radius:3px"></div>
</div>
<!-- right icon strip -->
<div id="ri" class="a"></div>
<div class="a" style="left:1331px;top:134px;width:34px;height:50px;background:#f4f4f4"></div>
<svg class="a" style="left:1331px;top:34px" width="34" height="350" viewBox="1331 34 34 350">
  <g fill="none" stroke="#555" stroke-width="1.5">
    <path d="M1346.5 66.6H1338.8V50.8H1357.4V60"/>
    <path d="M1342.5 54V59.5M1345.3 52V59.5M1348.4 56V59.5"/>
    <path d="M1349 63.6H1357.5M1353.2 59.5V67.8"/>
    <path d="M1339.7 108.3L1345 115L1350.7 103.4L1356 110.7"/>
  </g>
  <g fill="#555"><circle cx="1339.7" cy="108.3" r="1.9"/><circle cx="1345" cy="115" r="1.9"/><circle cx="1350.7" cy="103.4" r="1.9"/><circle cx="1356" cy="110.7" r="1.9"/></g>
  <g fill="#4a4a4a"><rect x="1338.9" y="150.1" width="7.8" height="7.6" rx="0.6"/><rect x="1348.9" y="150.1" width="8" height="7.6" rx="0.6"/><rect x="1338.9" y="160.2" width="7.8" height="7.7" rx="0.6"/></g>
  <path d="M1349 161.5H1357M1349 164.2H1357M1349 166.8H1357" stroke="#4a4a4a" stroke-width="1"/>
  <g stroke="#888" fill="none">
    <path d="M1343 200V218.5" stroke-width="2"/><path d="M1338 213.5H1358" stroke-width="2"/>
    <path d="M1346.5 203Q1347.5 209.5 1354.5 210.5" stroke-width="1.5"/>
    <path d="M1339.5 201.5V211M1345 216.5H1358" stroke-width="1" stroke-dasharray="1 2.5"/>
  </g>
  <g fill="#888"><rect x="1338" y="256" width="4" height="11.5"/><rect x="1344" y="249" width="4" height="18.5"/><path d="M1350.5 252H1354.5V258L1350.5 262Z"/></g>
  <path d="M1347.5 267L1356.5 258.5" stroke="#888" stroke-width="3.2"/><path d="M1347.5 267L1356.5 258.5" stroke="#e3e3e3" stroke-width="1.2"/>
  <g fill="#888"><rect x="1339" y="300.7" width="5" height="4.8"/><rect x="1339" y="307.2" width="5" height="4.8"/><rect x="1339" y="313.6" width="5" height="5"/>
  <rect x="1346" y="302" width="6" height="2.4"/><rect x="1354" y="302" width="3.4" height="2.4"/><rect x="1346" y="308.4" width="6" height="2.4"/><rect x="1354" y="308.4" width="3.4" height="2.4"/><rect x="1346" y="314.8" width="6" height="2.4"/><rect x="1354" y="314.8" width="3.4" height="2.4"/></g>
  <g transform="translate(1347.9 359.5) rotate(22.5)"><path fill="#888" fill-rule="evenodd" d="M6.20 -2.26 L8.77 -2.02 L8.77 2.02 L6.20 2.26 L5.98 2.79 L7.63 4.77 L4.77 7.63 L2.79 5.98 L2.26 6.20 L2.02 8.77 L-2.02 8.77 L-2.26 6.20 L-2.79 5.98 L-4.77 7.63 L-7.63 4.77 L-5.98 2.79 L-6.20 2.26 L-8.77 2.02 L-8.77 -2.02 L-6.20 -2.26 L-5.98 -2.79 L-7.63 -4.77 L-4.77 -7.63 L-2.79 -5.98 L-2.26 -6.20 L-2.02 -8.77 L2.02 -8.77 L2.26 -6.20 L2.79 -5.98 L4.77 -7.63 L7.63 -4.77 L5.98 -2.79Z M3.00 0A3.00 3.00 0 1 0 -3.00 0A3.00 3.00 0 1 0 3.00 0Z"/></g>
</svg>
<svg class="a" style="left:1343px;top:533px" width="10" height="13" viewBox="0 0 10 13"><path d="M8.5 1L2 6.5L8.5 12" fill="none" stroke="#555" stroke-width="1.2"/></svg>
<div class="a" style="left:1343px;top:554.0px;width:14px;font-size:12px;line-height:12px;color:#555;text-align:center">チ</div><div class="a" style="left:1343px;top:565.0px;width:14px;font-size:12px;line-height:12px;color:#555;text-align:center">ャ</div><div class="a" style="left:1343px;top:577.0px;width:14px;font-size:12px;line-height:12px;color:#555;text-align:center" ><span style="display:inline-block;transform:rotate(90deg)">ー</span></div><div class="a" style="left:1343px;top:588.0px;width:14px;font-size:12px;line-height:12px;color:#555;text-align:center">ト</div><div class="a" style="left:1343px;top:600.0px;width:14px;font-size:12px;line-height:12px;color:#555;text-align:center">切</div><div class="a" style="left:1343px;top:612.0px;width:14px;font-size:12px;line-height:12px;color:#555;text-align:center">替</div>
<!-- BOTTOM -->
<div id="bb" class="a">
  <div class="a" style="left:0;top:-1px;width:96px;height:25px;background:#fff;border-right:1px solid #e0e0e0"></div>
  <div class="a" style="left:7px;top:5px;font-size:12px;line-height:14px;color:#555">Dashboard*</div>
  <svg class="a" style="left:78px;top:8px" width="10" height="10" viewBox="0 0 10 10"><path d="M1 1L9 9M9 1L1 9" stroke="#888" stroke-width="1"/></svg>
  <svg class="a" style="left:104px;top:4px" width="16" height="17" viewBox="0 0 16 17"><path d="M4.5 3.5V1.5H10L13.5 5V13.5H11.5" fill="none" stroke="#555" stroke-width="1"/><path d="M1.5 4.5H8L11 7.5V16H1.5Z" fill="#f4f4f4" stroke="#555" stroke-width="1"/><path d="M4 10.5L7.5 14M7.5 10.5L4 14" stroke="#555" stroke-width="1"/></svg>
  <div class="a" style="left:1127px;top:5px;font-size:12px;line-height:14px;color:#555;white-space:nowrap">Chart3&nbsp;&nbsp;&nbsp;全てのデータ</div>
</div>
</div></body></html>
